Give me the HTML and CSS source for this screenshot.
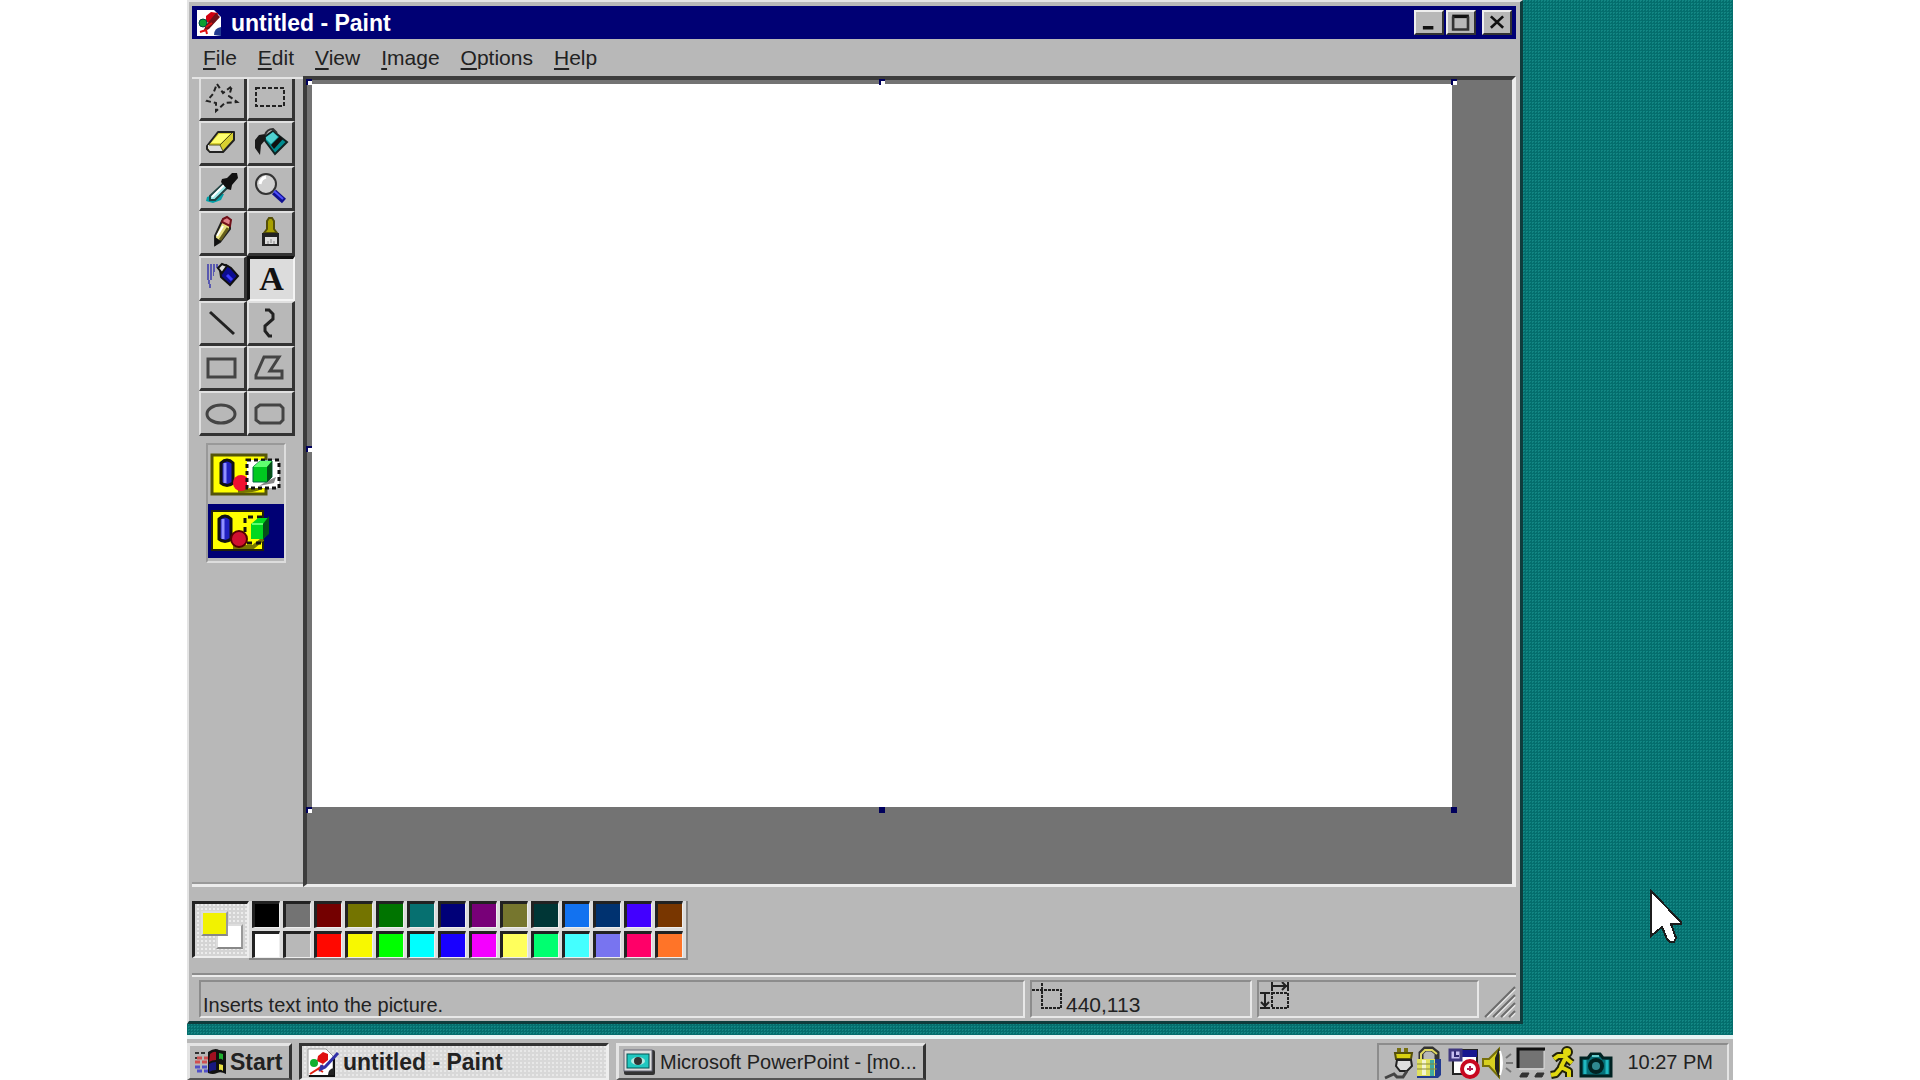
FILE: index.html
```html
<!DOCTYPE html>
<html lang="en">
<head>
  <meta charset="utf-8">
  <title>untitled - Paint</title>
  <link rel="stylesheet" href="styles.css">
</head>
<body>
  <main class="desktop">
    <section class="window">
      <header class="titlebar">
        <svg class="title-icon" viewBox="0 0 26 26">
          <path d="M1 0h17l7 7v19H1z" fill="#fff"/>
          <path d="M10 6l5-4 7 1-1 6-5 4-6-1z" fill="#d00010"/>
          <path d="M20 3l4 4-11 12-6 3 3-7z" fill="#701018"/>
          <path d="M24 10l-10 11" stroke="#fff" stroke-width="3"/>
          <circle cx="7" cy="13" r="4" fill="#0aa030" stroke="#044"/>
          <path d="M4 22l6-2 1 4M10 17l6-4" stroke="#e01010" stroke-width="2" fill="none"/>
          <path d="M18 25q0-7 7-8v9z" fill="#223a90"/>
        </svg>
        <h1>untitled - Paint</h1>
        <div class="controls">
          <button class="ctrl" aria-label="Minimize"><svg viewBox="0 0 28 24"><path d="M7 18h12" stroke="#111" stroke-width="4"/></svg></button>
          <button class="ctrl" aria-label="Maximize"><svg viewBox="0 0 28 24"><path d="M4 5h19" stroke="#111" stroke-width="4"/><path d="M5 5v15h17V5" stroke="#333" stroke-width="3" fill="none"/></svg></button>
          <button class="ctrl close" aria-label="Close"><svg viewBox="0 0 28 24"><path d="M7 5l14 13M21 5L7 18" stroke="#111" stroke-width="3"/></svg></button>
        </div>
      </header>

      <nav class="menubar">
        <button><u>F</u>ile</button>
        <button><u>E</u>dit</button>
        <button><u>V</u>iew</button>
        <button><u>I</u>mage</button>
        <button><u>O</u>ptions</button>
        <button><u>H</u>elp</button>
      </nav>

      <div class="workspace">
        <aside class="sidebar">
          <div class="tools">
            <button class="tool" aria-label="Free-form select">
              <svg viewBox="0 0 40 40"><path d="M14 5l6 9 9-7-3 10 8 6-12 1-9 8v-8l-9-2 6-7z" fill="none" stroke="#222" stroke-width="2" stroke-dasharray="5 3"/></svg>
            </button>
            <button class="tool" aria-label="Select">
              <svg viewBox="0 0 40 40"><rect x="5" y="9" width="28" height="18" fill="none" stroke="#222" stroke-width="2" stroke-dasharray="4 2"/></svg>
            </button>
            <button class="tool" aria-label="Eraser">
              <svg viewBox="0 0 40 40">
                <path d="M4 23L15 9h16v8L20 29H7l-3-3z" fill="#d8d030" stroke="#222" stroke-width="2" stroke-linejoin="round"/>
                <path d="M5 22h12l3 6H7l-2-3z" fill="#ddd"/>
                <path d="M6 22h11l12-12M17 22l3 6" fill="none" stroke="#55551a"/>
                <path d="M8 20l8-9h11l-9 9z" fill="#ffff70"/>
              </svg>
            </button>
            <button class="tool" aria-label="Fill">
              <svg viewBox="0 0 40 40">
                <path d="M12 15L22 8l14 11-12 12z" fill="#008c90" stroke="#122" stroke-width="2"/>
                <path d="M14 15l8-6 5 5-7 7z" fill="#50d0d0"/>
                <path d="M20 22l9-9 3 3-9 10z" fill="#111"/>
                <path d="M14 11l-6 1-4 5v8l5 7 1-10 5-6z" fill="#1a1a1a"/>
                <path d="M14 12q2-6 8-6l4 4" fill="none" stroke="#333" stroke-width="2"/>
              </svg>
            </button>
            <button class="tool" aria-label="Pick color">
              <svg viewBox="0 0 40 40">
                <path d="M4 29l8-3h9l-3 6-8 3-7-2z" fill="#00a0a8"/>
                <path d="M22 14l4 4-14 14H7v-4z" fill="#9ee8e8" stroke="#244" stroke-width="2"/>
                <path d="M9 29l13-13" stroke="#fff" stroke-width="2"/>
                <path d="M19 11l5-1 5-5h5l1 5-6 7-1 5-4-1-6-7z" fill="#111"/>
              </svg>
            </button>
            <button class="tool" aria-label="Magnifier">
              <svg viewBox="0 0 40 40">
                <circle cx="15" cy="16" r="10" fill="#d0d0d0" stroke="#333" stroke-width="2"/>
                <path d="M9 16q1-6 6-7" stroke="#fff" stroke-width="3" fill="none"/>
                <path d="M23 24l10 9" stroke="#101090" stroke-width="6"/>
                <path d="M23 23l9 8" stroke="#5050ff" stroke-width="2"/>
              </svg>
            </button>
            <button class="tool" aria-label="Pencil">
              <svg viewBox="0 0 40 40">
                <path d="M19 8l8 3v5L17 29l-5 3v-9z" fill="#e8e080" stroke="#222" stroke-width="2"/>
                <path d="M20 6l4-2 4 3-1 6-8-4z" fill="#e08088" stroke="#701018" stroke-width="2"/>
                <path d="M12 33v-9l6 4z" fill="#111"/>
                <path d="M20 13l-6 10" stroke="#fff" stroke-width="2"/>
                <path d="M25 15l-8 12" stroke="#66601a" stroke-width="3"/>
              </svg>
            </button>
            <button class="tool" aria-label="Brush">
              <svg viewBox="0 0 40 40">
                <path d="M16 16V8l2-3h3l2 3v8l3 4H13z" fill="#a8a000" stroke="#55500a" stroke-width="2"/>
                <path d="M11 20h17v13H11z" fill="#222"/>
                <path d="M14 24h12v7H14z" fill="#ddd"/>
                <path d="M17 28v3M20 26v4M23 28v3" stroke="#888"/>
              </svg>
            </button>
            <button class="tool" aria-label="Airbrush">
              <svg viewBox="0 0 40 40">
                <path d="M4 8h12M4 12h9M4 16h7M4 20h5M5 24h3M6 28h2" stroke="#5858b0" stroke-width="4" stroke-dasharray="2 1"/>
                <path d="M17 12l6-5 5 3 7 8-8 9-9-8z" fill="#0c0c90" stroke="#111" stroke-width="2"/>
                <path d="M15 10l4-4 5 2-5 7z" fill="#ddd" stroke="#111" stroke-width="2"/>
                <path d="M24 17l5 5" stroke="#3c3cff" stroke-width="3"/>
              </svg>
            </button>
            <button class="tool pressed" aria-label="Text">A</button>
            <button class="tool" aria-label="Line">
              <svg viewBox="0 0 40 40"><path d="M7 9l24 22" stroke="#222" stroke-width="3"/></svg>
            </button>
            <button class="tool" aria-label="Curve">
              <svg viewBox="0 0 40 40"><path d="M14 7h4l4 4v5l-8 7v5l4 5h3" fill="none" stroke="#222" stroke-width="3"/></svg>
            </button>
            <button class="tool" aria-label="Rectangle">
              <svg viewBox="0 0 40 40"><rect x="5" y="11" width="27" height="18" fill="none" stroke="#444" stroke-width="3"/></svg>
            </button>
            <button class="tool" aria-label="Polygon">
              <svg viewBox="0 0 40 40"><path d="M13 9h15l-9 14h12v7H5v-3z" fill="none" stroke="#444" stroke-width="3"/></svg>
            </button>
            <button class="tool" aria-label="Ellipse">
              <svg viewBox="0 0 40 40"><ellipse cx="18" cy="21" rx="14" ry="9" fill="none" stroke="#444" stroke-width="3"/></svg>
            </button>
            <button class="tool" aria-label="Rounded rectangle">
              <svg viewBox="0 0 40 40"><path d="M9 12h20l3 3v12l-3 3H9l-4-3V15z" fill="none" stroke="#444" stroke-width="3"/></svg>
            </button>
          </div>

          <div class="modes">
            <button class="mode" aria-label="Opaque">
              <svg viewBox="0 0 76 52">
                <rect x="4" y="6" width="54" height="39" fill="#ffff00" stroke="#55550a" stroke-width="3"/>
                <path d="M30 42q20 0 26-6" stroke="#777700" stroke-width="4" fill="none"/>
                <path d="M13 14q6-6 12 0v20q-6 5-12 0z" fill="#2020c0" stroke="#111" stroke-width="3"/>
                <path d="M17 14v20" stroke="#9090ff" stroke-width="3"/>
                <circle cx="33" cy="34" r="8" fill="#f01030"/>
                <rect x="39" y="11" width="32" height="28" fill="#fff" stroke="#111" stroke-width="3" stroke-dasharray="4 3"/>
                <path d="M59 32l9-4-2 6-15 3z" fill="#888"/>
                <path d="M45 18l7-6h12v16l-5 5H45z" fill="#00c820" stroke="#064"/>
                <path d="M45 18l7-6h12l-5 6z" fill="#60ff70"/>
                <path d="M59 18l5-6v16l-5 5z" fill="#045018"/>
              </svg>
            </button>
            <button class="mode selected" aria-label="Transparent">
              <svg viewBox="0 0 76 52">
                <rect x="4" y="6" width="51" height="39" fill="#ffff00" stroke="#22220a" stroke-width="2"/>
                <path d="M25 42h20l10-8" stroke="#777700" stroke-width="4" fill="none"/>
                <path d="M11 14q6-6 12 0v20q-6 5-12 0z" fill="#2020c0" stroke="#111" stroke-width="3"/>
                <path d="M15 14v20" stroke="#9090ff" stroke-width="3"/>
                <path d="M54 12H37v26h17" fill="none" stroke="#111" stroke-width="3" stroke-dasharray="5 4"/>
                <circle cx="31" cy="34" r="8" fill="#d01030" stroke="#500" stroke-width="2"/>
                <path d="M43 19l7-6h10v16l-5 5H43z" fill="#00d820"/>
                <path d="M55 19l6-8v18l-6 5z" fill="#045018"/>
                <path d="M44 19h11" stroke="#60ff70" stroke-width="2"/>
              </svg>
            </button>
          </div>
        </aside>

        <div class="stage">
          <div class="paper">
            <i class="handle top left light"></i>
            <i class="handle top center light"></i>
            <i class="handle top right light"></i>
            <i class="handle middle left light"></i>
            <i class="handle bottom left light"></i>
            <i class="handle bottom center"></i>
            <i class="handle bottom right"></i>
          </div>
        </div>
      </div>

      <div class="palette">
        <div class="current">
          <span class="back"></span>
          <span class="fore"></span>
        </div>
        <div class="swatches">
          <button class="swatch black" aria-label="Black"></button>
          <button class="swatch gray" aria-label="Gray"></button>
          <button class="swatch maroon" aria-label="Maroon"></button>
          <button class="swatch olive" aria-label="Olive"></button>
          <button class="swatch green" aria-label="Green"></button>
          <button class="swatch teal" aria-label="Teal"></button>
          <button class="swatch navy" aria-label="Navy"></button>
          <button class="swatch purple" aria-label="Purple"></button>
          <button class="swatch moss" aria-label="Moss"></button>
          <button class="swatch pine" aria-label="Pine"></button>
          <button class="swatch azure" aria-label="Azure"></button>
          <button class="swatch denim" aria-label="Denim"></button>
          <button class="swatch violet" aria-label="Violet"></button>
          <button class="swatch brown" aria-label="Brown"></button>
          <button class="swatch white" aria-label="White"></button>
          <button class="swatch silver" aria-label="Silver"></button>
          <button class="swatch red" aria-label="Red"></button>
          <button class="swatch yellow" aria-label="Yellow"></button>
          <button class="swatch lime" aria-label="Lime"></button>
          <button class="swatch aqua" aria-label="Aqua"></button>
          <button class="swatch blue" aria-label="Blue"></button>
          <button class="swatch fuchsia" aria-label="Fuchsia"></button>
          <button class="swatch lemon" aria-label="Lemon"></button>
          <button class="swatch spring" aria-label="Spring green"></button>
          <button class="swatch sky" aria-label="Sky"></button>
          <button class="swatch lilac" aria-label="Lilac"></button>
          <button class="swatch rose" aria-label="Rose"></button>
          <button class="swatch orange" aria-label="Orange"></button>
        </div>
      </div>

      <footer class="statusbar">
        <div class="panel message">Inserts text into the picture.</div>
        <div class="panel position">
          <svg viewBox="0 0 34 34"><path d="M0 8h29v18H10V0" fill="none" stroke="#222" stroke-width="2" stroke-dasharray="3 1"/></svg>
          <span>440,113</span>
        </div>
        <div class="panel size">
          <svg viewBox="0 0 34 34">
            <rect x="13" y="11" width="16" height="15" fill="none" stroke="#222" stroke-width="2" stroke-dasharray="3 1"/>
            <path d="M13 0v9M29 0v9M13 4h15M23 0l4 4-4 4M1 11h10M1 26h10M6 11v14M2 20l4 4 4-4" fill="none" stroke="#222" stroke-width="2"/>
          </svg>
        </div>
        <svg class="grip" viewBox="0 0 32 32">
          <path d="M3 31L31 3M11 31l20-20M19 31l12-12M27 31l4-4" stroke="#e8e8e8" stroke-width="2"/>
          <path d="M1 31L31 1M9 31L31 9M17 31l14-14M25 31l6-6" stroke="#6c6c6c" stroke-width="2"/>
        </svg>
      </footer>
    </section>

    <svg class="cursor" viewBox="0 0 34 55" shape-rendering="crispEdges">
      <path d="M2 2v45l11-9 5 12 3 3h4l2-4-5-14h10v-2z" fill="#fff" stroke="#1c1c1c" stroke-width="2"/>
    </svg>
  </main>

  <footer class="taskbar">
    <button class="start">
      <svg viewBox="0 0 34 28">
        <path d="M15 4q7-5 11-2l7 1v23q-5-3-9-1t-9 0z" fill="#111"/>
        <path d="M17 6q4-3 6-2v8q-4 0-7 2z" fill="#a01020"/>
        <path d="M26 5l4 1v6q-2-2-4-1z" fill="#20b030"/>
        <path d="M16 16q3-2 7-2v8q-4 0-7 2z" fill="#181880"/>
        <path d="M26 16l4 1v6q-2-2-4-1z" fill="#e8e040"/>
        <path d="M2 5h12M2 10h5" stroke="#333" stroke-width="2" stroke-dasharray="4 2"/>
        <path d="M4 10h11M2 14h13" stroke="#d05050" stroke-width="3" stroke-dasharray="5 2"/>
        <path d="M2 19h13M4 23h11" stroke="#5050c8" stroke-width="3" stroke-dasharray="5 2"/>
      </svg>
      Start
    </button>
    <button class="task active">
      <svg viewBox="0 0 34 30">
        <path d="M2 2h18l7 7v20H2z" fill="#fff" stroke="#999"/>
        <path d="M28 10v19H3" fill="none" stroke="#111" stroke-width="2"/>
        <path d="M12 9l5-4 5 2v6l-5 4-6-3z" fill="#e01010"/>
        <circle cx="8" cy="16" r="4" fill="#10b030"/>
        <path d="M4 27l8-5 5 3M12 22l5-4" stroke="#e02010" stroke-width="2" fill="none"/>
        <path d="M32 6L19 20l-4 2 1-4" stroke="#3030a8" stroke-width="3" fill="none"/>
        <path d="M22 28q0-6 6-7v7z" fill="#222"/>
      </svg>
      untitled - Paint
    </button>
    <button class="task">
      <svg viewBox="0 0 34 30">
        <rect x="1" y="3" width="31" height="25" rx="2" fill="#333"/>
        <rect x="1" y="3" width="28" height="21" fill="#ddd" stroke="#667"/>
        <rect x="4" y="7" width="22" height="14" fill="#20c8c0" stroke="#055"/>
        <ellipse cx="15" cy="14" rx="7" ry="4" fill="#b0e8e0"/>
        <circle cx="15" cy="14" r="4" fill="#333"/>
      </svg>
      <span>Microsoft PowerPoint - [mo...</span>
    </button>
    <div class="tray">
      <svg class="plug" viewBox="0 0 32 34">
        <path d="M16 2v6M23 2v6" stroke="#777010" stroke-width="4"/>
        <path d="M12 7h17l-1 6H13z" fill="#d8d010" stroke="#55500a" stroke-width="2"/>
        <path d="M14 14h14l1 6-5 5h-7l-4-5z" fill="#ddd" stroke="#222" stroke-width="2"/>
        <path d="M24 25l-4 6h-6l-3-3-9 4" fill="none" stroke="#444" stroke-width="3"/>
      </svg>
      <svg class="lock" viewBox="0 0 28 34">
        <path d="M6 14V7l4-4h7l5 4v7" fill="none" stroke="#333" stroke-width="5"/>
        <path d="M6 13V8l4-4h7l5 4" fill="none" stroke="#e0d860" stroke-width="2"/>
        <path d="M2 13h24v16l-3 3H2z" fill="#223a90"/>
        <path d="M2 13h18v17H2z" fill="#e0e060"/>
        <path d="M9 14v15" stroke="#f4f4d0" stroke-width="4"/>
        <path d="M17 14v16" stroke="#40a8a0" stroke-width="4"/>
        <path d="M2 18h20M2 23h20" stroke="#88883a"/>
      </svg>
      <svg class="sched" viewBox="0 0 34 34">
        <path d="M6 4h24v24H6z" fill="#fff" stroke="#222" stroke-width="2"/>
        <path d="M14 4h16v7H14z" fill="#181890"/>
        <path d="M3 4h11v10H3z" fill="#c8c0f0" stroke="#403880" stroke-width="3"/>
        <path d="M8 5v5h4" stroke="#302870" stroke-width="2" fill="none"/>
        <circle cx="23" cy="23" r="8" fill="#fff" stroke="#c80820" stroke-width="4"/>
        <path d="M23 20v5M20 23h6" stroke="#b02050" stroke-width="2"/>
      </svg>
      <svg class="speaker" viewBox="0 0 34 34">
        <path d="M2 13h6L18 3v28L8 20H2z" fill="#d8d020" stroke="#77700a" stroke-width="2"/>
        <path d="M18 2v30l-4-9V12z" fill="#222"/>
        <path d="M19 5q4 12 0 24" fill="#fff" stroke="#fff" stroke-width="2"/>
        <path d="M25 12l5-4M25 17h7M25 22l5 4" stroke="#777" stroke-width="2"/>
      </svg>
      <svg class="monitor" viewBox="0 0 34 34">
        <rect x="3" y="3" width="26" height="19" fill="#737373"/>
        <path d="M3 22V3h27" fill="none" stroke="#111" stroke-width="3"/>
        <path d="M29 5v18H4" stroke="#ddd" fill="none"/>
        <path d="M5 30l2-3h7l-2 4H5zM20 30l2-3h7l-2 4h-7z" fill="#333" stroke="#333"/>
      </svg>
      <svg class="runner" viewBox="0 0 30 34">
        <path d="M5 13l4-3h7l2 3 5 4M16 13l-4 8 8 4v6M12 22l-5 6-5 1" fill="none" stroke="#22220a" stroke-width="8" stroke-linejoin="round"/>
        <circle cx="18" cy="6" r="5" fill="#e0d810" stroke="#22220a" stroke-width="2"/>
        <path d="M5 13l4-3h7l2 3 5 4M16 13l-4 8 8 4v6M12 22l-5 6-5 1" fill="none" stroke="#e0d810" stroke-width="4" stroke-linejoin="round"/>
      </svg>
      <svg class="camera" viewBox="0 0 34 34">
        <path d="M2 12h7l3-4h9l3 4h8v18H2z" fill="#067078" stroke="#022" stroke-width="3"/>
        <path d="M6 14v14M28 14v14" stroke="#20b8c0" stroke-width="3"/>
        <circle cx="17" cy="20" r="8" fill="#022"/>
        <circle cx="17" cy="20" r="4" fill="#308890"/>
        <path d="M13 10h7" stroke="#6cc" stroke-width="2"/>
      </svg>
      <time>10:27 PM</time>
    </div>
  </footer>
</body>
</html>
```
FILE: styles.css
```css
* { box-sizing: border-box; }
body {
  margin: 0;
  padding: 0 187px;
  height: 100vh;
  overflow: hidden;
  display: flex;
  flex-direction: column;
  background: #fff;
  color: #222;
  font-family: "Liberation Sans", Arial, sans-serif;
  font-size: 20px;
}
button {
  margin: 0;
  padding: 0;
  border: none;
  background: #b8b8b8;
  color: inherit;
  font: inherit;
}
svg { display: block; }

.desktop {
  position: relative;
  flex: 1;
  min-height: 0;
  display: flex;
  padding: 0 210px 11px 0;
  background: conic-gradient(#128683 25%, #046e6d 0) 0 0 / 3px 3px;
}
.cursor {
  position: absolute;
  right: 50px;
  bottom: 91px;
  width: 34px;
  height: 55px;
}

/* window */
.window {
  flex: 1;
  min-width: 0;
  display: flex;
  flex-direction: column;
  padding: 4px 4px 0 3px;
  background: #b8b8b8;
  border: 2px solid #e4e4e4;
  border-right: 3px solid #103c3c;
  border-bottom: 3px solid #103c3c;
}
.titlebar {
  height: 33px;
  display: flex;
  align-items: center;
  padding: 0 4px;
  background: #000074;
  color: #fff;
}
.title-icon {
  width: 26px;
  height: 26px;
}
.titlebar h1 {
  flex: 1;
  margin: 0 0 0 9px;
  font-size: 23px;
  line-height: 26px;
}
.controls { display: flex; gap: 2px; }
.ctrl {
  width: 30px;
  height: 25px;
  border: 2px solid #eee;
  border-right-color: #333;
  border-bottom-color: #333;
}
.ctrl svg { width: 26px; height: 21px; }
.ctrl.close { margin-left: 4px; }

.menubar {
  height: 37px;
  display: flex;
  align-items: center;
  gap: 21px;
  padding: 0 11px;
}
.menubar button { font-size: 21px; line-height: 24px; }
.menubar u {
  text-decoration-thickness: 2px;
  text-underline-offset: 3px;
}

.workspace {
  flex: 1;
  min-height: 0;
  display: flex;
}
.sidebar {
  width: 111px;
  margin-top: 1px;
  padding-left: 7px;
  border-top: 2px solid #e4e4e4;
  border-bottom: 3px solid #ececec;
  box-shadow: inset 0 -2px #999;
}
.tools {
  width: 96px;
  display: grid;
  grid-template-columns: 1fr 1fr;
  grid-template-rows: 42px;
  grid-auto-rows: 45px;
}
.tool {
  display: flex;
  align-items: center;
  justify-content: center;
  border: 2px solid #e0e0e0;
  border-right: 3px solid #333;
  border-bottom: 3px solid #333;
}
.tool:nth-child(-n+2) { border-top: none; }
.tool svg { width: 40px; height: 40px; }
.tool.pressed {
  background: #dcdcdc;
  border: 3px solid #111;
  border-right: 2px solid #f4f4f4;
  border-bottom: 2px solid #f4f4f4;
  font-family: "Liberation Serif", serif;
  font-size: 34px;
  font-weight: bold;
  line-height: 36px;
  color: #111;
}
.modes {
  width: 80px;
  margin: 7px 0 0 7px;
  border: 2px solid #999;
  border-right-color: #ddd;
  border-bottom-color: #ddd;
  display: grid;
  grid-template-rows: 59px 54px;
  padding-bottom: 3px;
}
.mode svg { width: 76px; height: 52px; }
.mode.selected { background: #000074; }

.stage {
  flex: 1;
  display: flex;
  background: #737373;
  border: 4px solid #3c3c3c;
  border-right-color: #ececec;
  border-bottom: 3px solid #ececec;
}
.paper {
  position: relative;
  flex: 1;
  margin: 4px 60px 77px 5px;
  background: #fff;
}
.handle {
  position: absolute;
  width: 6px;
  height: 6px;
  background: #00005c;
}
.handle.light {
  background: #fff;
  border: 2px solid #00005c;
  border-right: none;
  border-bottom: none;
}
.handle.top { top: -5px; }
.handle.middle { top: 50%; }
.handle.bottom { bottom: -6px; }
.handle.left { left: -6px; }
.handle.center { left: calc(50% - 3px); }
.handle.right { right: -5px; }

/* palette */
.palette {
  height: 86px;
  display: flex;
  padding-top: 14px;
}
.current {
  position: relative;
  width: 57px;
  height: 57px;
  background: conic-gradient(#ececec 25%, #d4d4d4 0) 0 0 / 4px 4px;
  border: 3px solid #222;
  border-right: 2px solid #eee;
  border-bottom: 2px solid #eee;
}
.fore, .back {
  position: absolute;
  width: 27px;
  height: 25px;
  border: 2px solid #ddd;
  border-right-color: #999;
  border-bottom-color: #888;
}
.fore { left: 6px; top: 7px; background: #f2f200; }
.back { right: 4px; bottom: 7px; background: #fff; }
.swatches {
  display: grid;
  grid-template-columns: repeat(14, 28px);
  grid-auto-rows: 27px;
  gap: 3px;
  height: 59px;
  padding: 0 3px;
  background: #dcdcdc;
  border-right: 2px solid #888;
  border-bottom: 2px solid #888;
}
.swatch {
  border: 3px solid #222;
  border-right: 1px solid #eee;
  border-bottom: 1px solid #eee;
}
.black { background: #000; }
.gray { background: #737373; }
.maroon { background: #740000; }
.olive { background: #747400; }
.green { background: #007400; }
.teal { background: #067070; }
.navy { background: #000078; }
.purple { background: #780078; }
.moss { background: #76762e; }
.pine { background: #003636; }
.azure { background: #1272f0; }
.denim { background: #003270; }
.violet { background: #4200ff; }
.brown { background: #783600; }
.white { background: #fff; }
.silver { background: #b8b8b8; }
.red { background: #ff0800; }
.yellow { background: #f8f800; }
.lime { background: #00ff00; }
.aqua { background: #00ffff; }
.blue { background: #1800ff; }
.fuchsia { background: #f400ff; }
.lemon { background: #ffff5c; }
.spring { background: #00ff70; }
.sky { background: #44ffff; }
.lilac { background: #7874f0; }
.rose { background: #ff0068; }
.orange { background: #ff7428; }

/* status bar */
.statusbar {
  height: 48px;
  display: flex;
  gap: 5px;
  padding: 5px 0 3px 7px;
  border-top: 2px solid #8c8c8c;
  box-shadow: inset 0 2px #ececec;
}
.panel {
  display: flex;
  border: 2px solid #8c8c8c;
  border-right-color: #e8e8e8;
  border-bottom-color: #e8e8e8;
}
.panel svg { width: 34px; height: 34px; }
.message {
  flex: 1;
  padding: 11px 0 0 2px;
  line-height: 24px;
}
.position, .size { width: 222px; }
.position span {
  padding-top: 11px;
  font-size: 21px;
  line-height: 24px;
}
.grip {
  width: 32px;
  height: 32px;
  align-self: flex-end;
}

/* taskbar */
.taskbar {
  height: 45px;
  display: flex;
  gap: 7px;
  padding: 4px 4px 0 0;
  background: #b8b8b8;
  border-top: 4px solid #e6f4f4;
}
.start, .task {
  height: 37px;
  display: flex;
  align-items: center;
  border: 3px solid #e4e4e4;
  border-right-color: #333;
  border-bottom: 2px solid #555;
  white-space: nowrap;
}
.start {
  width: 105px;
  gap: 3px;
  padding-left: 3px;
  font-size: 23px;
  font-weight: bold;
}
.start svg { width: 34px; height: 28px; }
.task {
  width: 310px;
  gap: 3px;
  padding-left: 4px;
}
.task svg { width: 34px; height: 30px; }
.task span { font-size: 20px; }
.task.active {
  background: conic-gradient(#e8e8e8 25%, #d8d8d8 0) 0 0 / 4px 4px;
  border-color: #333 #eee #eee #333;
  font-size: 23px;
  font-weight: bold;
}
.tray {
  margin-left: auto;
  display: flex;
  align-items: center;
  padding: 0 14px 0 4px;
  border: 2px solid #8c8c8c;
  border-right-color: #e4e4e4;
  border-bottom: none;
}
.tray svg { height: 34px; }
.plug { width: 32px; }
.lock { width: 28px; }
.sched { width: 34px; margin-left: 4px; }
.speaker { width: 34px; }
.monitor { width: 34px; }
.runner { width: 30px; }
.camera { width: 34px; }
.tray time { margin-left: 14px; }
```
